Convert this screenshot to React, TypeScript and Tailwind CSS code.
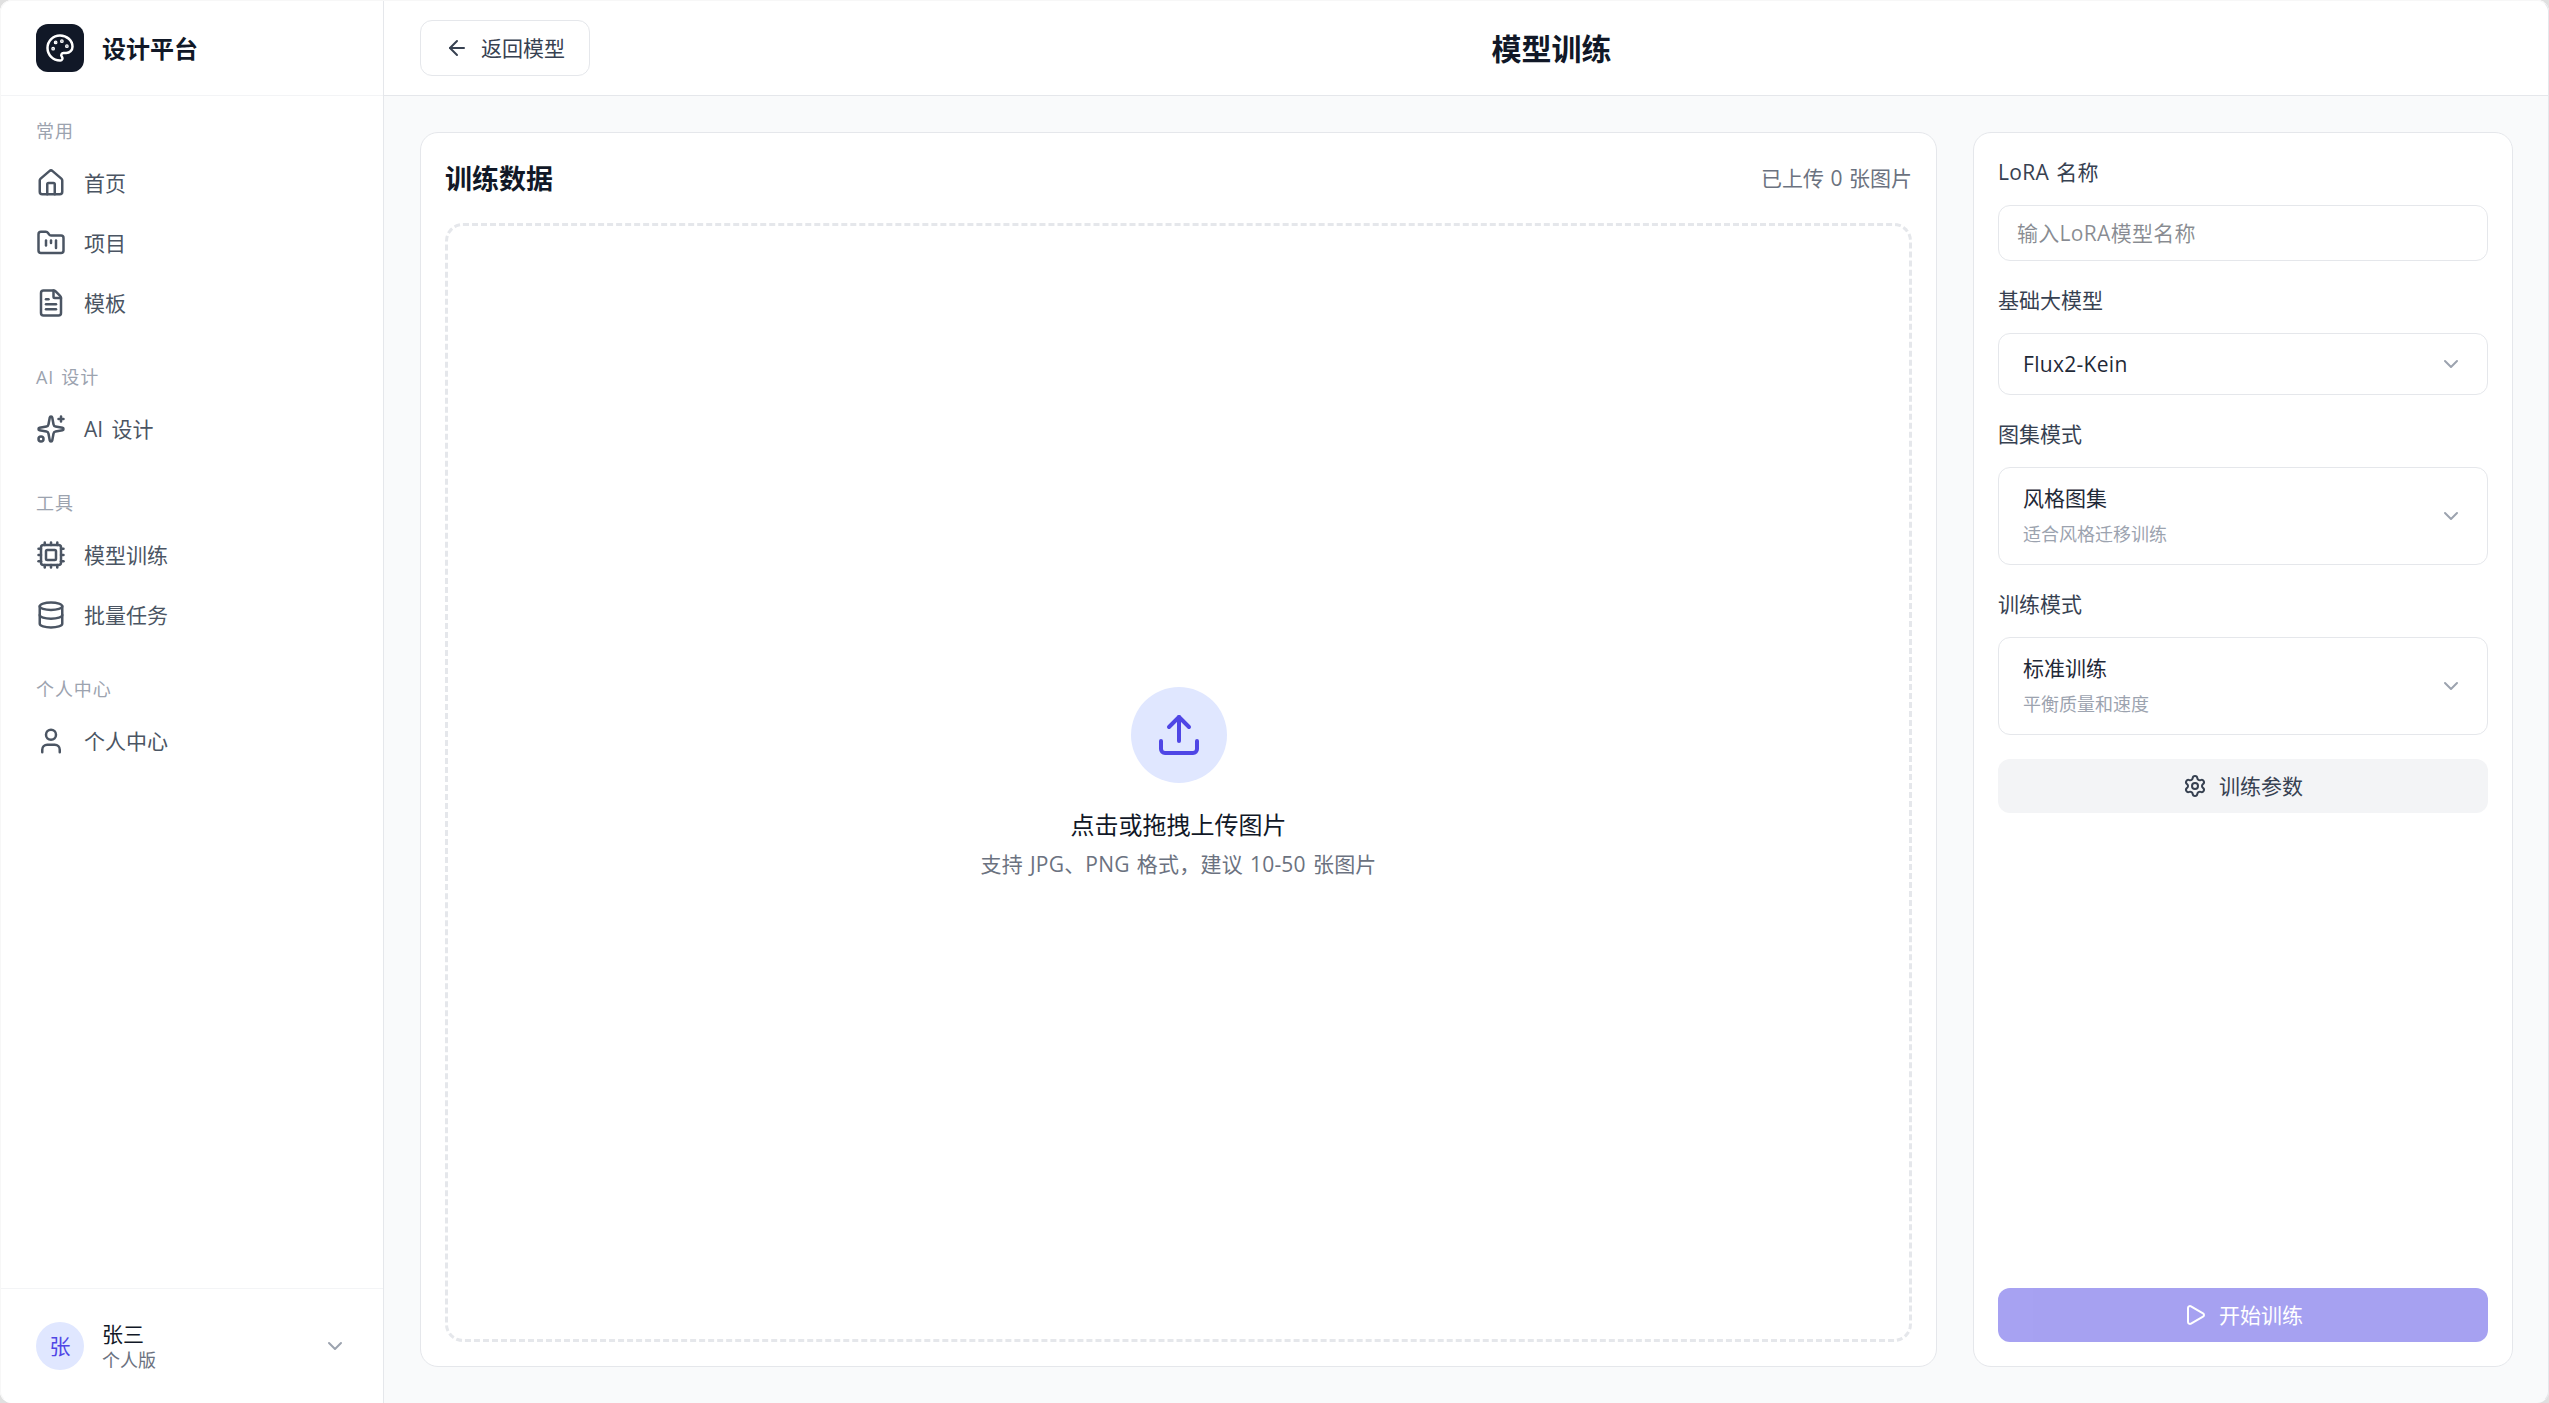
import React from 'react';
import {
  ArrowLeft,
  ChevronDown,
  Cpu,
  Database,
  FileText,
  FolderKanban,
  House,
  Palette,
  Play,
  Settings,
  Sparkles,
  Upload,
  User,
  type LucideIcon,
} from 'lucide-react';

interface NavItem {
  label: string;
  icon: LucideIcon;
}

interface NavSection {
  title: string;
  items: NavItem[];
}

const sections: NavSection[] = [
  {
    title: '常用',
    items: [
      { label: '首页', icon: House },
      { label: '项目', icon: FolderKanban },
      { label: '模板', icon: FileText },
    ],
  },
  { title: 'AI 设计', items: [{ label: 'AI 设计', icon: Sparkles }] },
  {
    title: '工具',
    items: [
      { label: '模型训练', icon: Cpu },
      { label: '批量任务', icon: Database },
    ],
  },
  { title: '个人中心', items: [{ label: '个人中心', icon: User }] },
];

const Sidebar: React.FC = () => (
  <aside className="flex w-96 shrink-0 flex-col border-r border-[#e5e7eb] bg-white">
    <div className="flex h-24 shrink-0 items-center gap-[18px] border-b border-[#f3f4f6] px-9">
      <div className="flex size-12 items-center justify-center rounded-xl bg-[#111827]">
        <Palette className="size-[30px] text-white" />
      </div>
      <span className="pt-0.5 text-2xl font-bold text-[#111827]">设计平台</span>
    </div>

    <nav className="flex-1 px-9 pt-6">
      {sections.map(section => (
        <div key={section.title} className="mb-9">
          <div className="-mt-px mb-[13px] text-[18px] leading-6 tracking-wider text-[#9ca3af]">{section.title}</div>
          <div className="flex flex-col gap-1.5">
            {section.items.map(({ label, icon: Icon }) => (
              <a key={label} className="flex h-[54px] items-center gap-[18px] text-[21px] text-[#4b5563]">
                <Icon className="size-[30px]" />
                <span className="pt-0.5 [word-spacing:3px]">{label}</span>
              </a>
            ))}
          </div>
        </div>
      ))}
    </nav>

    <div className="flex h-[115px] items-center gap-[18px] border-t border-[#f3f4f6] px-9">
      <div className="flex size-12 items-center justify-center rounded-full bg-[#e0e7ff] pt-0.5 text-[21px] text-[#4f46e5]">
        张
      </div>
      <div className="flex-1 pt-0.5">
        <div className="text-[21px] leading-[26px] text-[#111827]">张三</div>
        <div className="text-[18px] leading-[26px] text-[#6b7280]">个人版</div>
      </div>
      <ChevronDown className="size-6 text-[#9ca3af]" />
    </div>
  </aside>
);

interface SelectFieldProps {
  label: string;
  value: string;
  hint?: string;
}

const SelectField: React.FC<SelectFieldProps> = ({ label, value, hint }) => (
  <div>
    <div className="mb-[18px] text-[21px] leading-[30px] text-[#374151]">{label}</div>
    <button className="flex w-full items-center justify-between rounded-xl border border-[#e5e7eb] px-6 py-[15px] text-left">
      <div>
        <div className={`text-[21px] leading-[30px] text-[#1f2937] ${hint ? '' : 'tracking-[0.3px]'}`}>{value}</div>
        {hint && <div className="mt-1.5 text-[18px] leading-[30px] text-[#9ca3af]">{hint}</div>}
      </div>
      <ChevronDown className="size-6 text-[#9ca3af]" />
    </button>
  </div>
);

const TrainingData: React.FC = () => (
  <section className="flex flex-1 flex-col rounded-[18px] border border-[#e5e7eb] bg-white p-6">
    <div className="mb-6 flex h-[42px] items-center justify-between">
      <h2 className="pt-0.5 text-[27px] font-bold text-[#111827]">训练数据</h2>
      <span className="pt-px text-[21px] text-[#6b7280] [word-spacing:1px]">已上传 0 张图片</span>
    </div>
    <div className="flex flex-1 flex-col items-center justify-center rounded-[18px] border-3 border-dashed border-[#e5e7eb]">
      <div className="mb-6 flex size-24 items-center justify-center rounded-full bg-[#e0e7ff]">
        <Upload className="size-12 text-[#4f46e5]" />
      </div>
      <p className="mb-1.5 text-2xl leading-9 text-[#111827]">点击或拖拽上传图片</p>
      <p className="text-[21px] leading-[30px] tracking-[0.2px] text-[#6b7280]">
        支持 JPG、PNG 格式，建议 10-50 张图片
      </p>
    </div>
  </section>
);

const TrainingSettings: React.FC = () => (
  <section className="flex w-[540px] shrink-0 flex-col gap-6 rounded-[18px] border border-[#e5e7eb] bg-white p-6">
    <div>
      <div className="mb-[18px] text-[21px] leading-[30px] tracking-[0.3px] text-[#374151]">LoRA 名称</div>
      <input
        placeholder="输入LoRA模型名称"
        className="block h-14 w-full rounded-xl border border-[#e5e7eb] px-[18px] text-[21px] tracking-[0.3px] text-[#111827]"
      />
    </div>
    <SelectField label="基础大模型" value="Flux2-Kein" />
    <SelectField label="图集模式" value="风格图集" hint="适合风格迁移训练" />
    <SelectField label="训练模式" value="标准训练" hint="平衡质量和速度" />
    <button className="flex h-[54px] items-center justify-center gap-3 rounded-xl bg-[#f3f4f6] text-[21px] text-[#374151]">
      <Settings className="size-6" />
      <span className="pt-px">训练参数</span>
    </button>
    <button className="mt-auto flex h-[54px] items-center justify-center gap-3 rounded-xl bg-[#4f46e5] text-[21px] text-white opacity-50">
      <Play className="size-6" />
      <span className="pt-px">开始训练</span>
    </button>
  </section>
);

export default function App() {
  return (
    <div className="relative h-screen overflow-hidden bg-[#e0e0e0] font-['Open_Sans','Noto_Sans_CJK_SC',sans-serif] [word-spacing:1.5px]">
      <div className="flex h-full overflow-hidden rounded-xl bg-[#f9fafb]">
        <Sidebar />
        <div className="flex flex-1 flex-col">
          <header className="flex h-24 shrink-0 items-center justify-between border-b border-[#e5e7eb] bg-white px-9">
            <button className="flex h-14 items-center gap-3 rounded-xl border border-[#e5e7eb] px-6 text-[21px] text-[#374151]">
              <ArrowLeft className="size-6" />
              <span className="pt-0.5">返回模型</span>
            </button>
            <h1 className="pt-px text-[30px] font-bold text-[#111827]">模型训练</h1>
            <div />
          </header>
          <main className="flex flex-1 gap-9 p-9">
            <TrainingData />
            <TrainingSettings />
          </main>
        </div>
      </div>
      {/* window edge */}
      <div className="pointer-events-none absolute inset-0 rounded-xl border border-[#f7f7f7] border-r-[#e5e7eb] border-b-transparent" />
    </div>
  );
}
